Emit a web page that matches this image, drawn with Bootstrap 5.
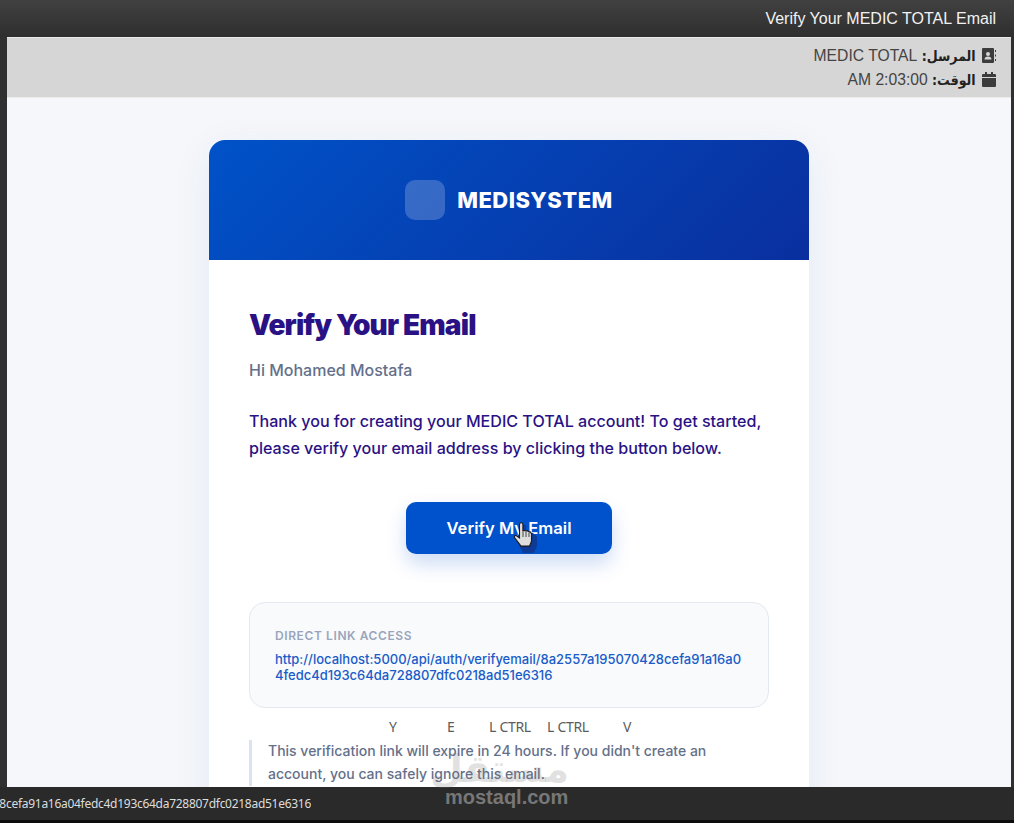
<!DOCTYPE html>
<html lang="en">
  <head>
    <meta charset="UTF-8" />
    <meta name="viewport" content="width=device-width, initial-scale=1.0" />
    <title>Verify Your MEDIC TOTAL Email</title>
    <link
      href="https://cdn.jsdelivr.net/npm/bootstrap@5.3.3/dist/css/bootstrap.min.css"
      rel="stylesheet"
    />
    <style>
      html, body { height: 100%; }
      body { background: #303030; overflow: hidden; font-family: "Inter", sans-serif; }
      .shell { height: 100vh; }
      .title-bar {
        height: 37px; padding-right: 18px; color: #f2f2f2;
        background: linear-gradient(#414141, #2e2e2e);
        font: 16px/37px "Liberation Sans", sans-serif;
      }
      .mail-win { margin: 0 3px 0 7px; min-height: 0; background: #f5f7fa; overflow: hidden; }
      .meta-bar {
        height: 61px; padding: 6px 15px 0 0; background: #d6d6d6; color: #444;
        border-top: 1px solid #e8e8e8; border-bottom: 1px solid #ececec;
        font: 15.7px/24px "Liberation Sans", "DejaVu Sans", sans-serif;
      }
      .meta-row { height: 24px; }
      .meta-bar b { color: #222; font-family: "DejaVu Sans Condensed", "DejaVu Sans", sans-serif; font-size: 14px; }
      .meta-ico { width: 14px; height: 15px; fill: #3c3c3c; vertical-align: -2px; margin-left: 2px; }
      .mail-card {
        width: 600px; margin: 42px auto 0; background: #fff;
        border-radius: 16px 16px 0 0; box-shadow: 0 10px 40px rgba(0, 64, 190, .07);
      }
      .mail-head {
        height: 120px; gap: 12px; color: #fff; border-radius: 16px 16px 0 0;
        background: linear-gradient(135deg, #0052c8, #0a2f9e);
      }
      .logo-box { width: 40px; height: 40px; border-radius: 10px; background: rgba(255, 255, 255, .2); }
      .logo-name { font-size: 22px; font-weight: 800; letter-spacing: .45px; }
      .mail-body { padding: 40px; }
      .mail-title { font-size: 28px; font-weight: 900; line-height: 50px; letter-spacing: -.85px; color: #2a1285; margin: 0 0 7px; }
      .hi-line { font-size: 16px; font-weight: 500; line-height: 26px; color: #64708a; margin: 0 0 25px; }
      .lead-line { font-size: 16.08px; font-weight: 500; line-height: 27px; color: #2a1285; margin: 0 0 40px; }
      .verify-btn {
        width: 206px; height: 52px; border: 0; border-radius: 10px; color: #fff;
        background: #0052cc; font-size: 16.6px; font-weight: 600;
        box-shadow: 0 10px 20px rgba(0, 82, 204, .2);
      }
      .link-box { margin-top: 48px; height: 106px; padding: 25px 20px 25px 25px; background: #f8fafc; border: 1px solid #e4e8f0; border-radius: 16px; }
      .link-cap { font-size: 12px; font-weight: 600; letter-spacing: .6px; line-height: 16px; color: #9aa5bd; margin-bottom: 7px; }
      .link-url { font-size: 13px; font-weight: 500; line-height: 16px; color: #1a5cc8; word-break: break-all; text-decoration: none; display: block; }
      .note-line { margin-top: 32px; padding: 0 20px 1px 16px; border-left: 3px solid #dbe3f0; font-size: 14px; font-weight: 500; line-height: 22.5px; color: #64708a; }
      .status-bar { height: 36px; background: #2a2a2a; border-bottom: 3px solid #0c0c0c; color: #ddd; }
      .status-clip { width: 311px; overflow: hidden; font: 12px/33px "Noto Sans", sans-serif; letter-spacing: -.28px; }
      .key-tag { position: absolute; top: 718px; font: 14px/18px "Noto Sans", sans-serif; letter-spacing: -.3px; color: #5c5c5c; }
      .wm-site { position: absolute; left: 445px; top: 785px; font: 700 20px/24px "Liberation Sans", sans-serif; color: #777; }
      .wm-ar { position: absolute; left: 445px; top: 748px; width: 124px; font: 700 38px/42px "DejaVu Sans", sans-serif; color: rgba(120, 120, 120, .22); text-align: center; }
      .hand-cur { position: absolute; left: 513px; top: 522px; width: 26px; height: 32px; }
    </style>
  </head>

  <body>
    <div class="shell d-flex flex-column">
      <div class="title-bar text-end flex-shrink-0">Verify Your MEDIC TOTAL Email</div>
      <div class="mail-win flex-grow-1">
        <div class="meta-bar text-end">
          <div class="meta-row" dir="rtl">
            <svg class="meta-ico" viewBox="0 0 14 15"><path d="M1 0h10a1 1 0 0 1 1 1v13a1 1 0 0 1-1 1H1a1 1 0 0 1-1-1V1a1 1 0 0 1 1-1zM6 4a2 2 0 1 0 0 4 2 2 0 0 0 0-4zM2.500 11.500h7c0-1.800-1.500-3-3.500-3s-3.500 1.200-3.500 3z" fill-rule="evenodd"/><path d="M13 2h1v2h-1zM13 6.500h1v2h-1zM13 11h1v2h-1z"/></svg>
            <b>المرسل:</b> MEDIC TOTAL
          </div>
          <div class="meta-row" dir="rtl">
            <svg class="meta-ico" viewBox="0 0 14 15"><path d="M3 0h2v2h4V0h2v2h2a1 1 0 0 1 1 1v2H0V3a1 1 0 0 1 1-1h2zM0 6h14v8a1 1 0 0 1-1 1H1a1 1 0 0 1-1-1z"/></svg>
            <b>الوقت:</b> 2:03:00 AM
          </div>
        </div>
        <div class="mail-card">
          <div class="mail-head d-flex align-items-center justify-content-center">
            <div class="logo-box"></div>
            <div class="logo-name">MEDISYSTEM</div>
          </div>
          <div class="mail-body">
            <h1 class="mail-title">Verify Your Email</h1>
            <p class="hi-line">Hi Mohamed Mostafa</p>
            <p class="lead-line">Thank you for creating your MEDIC TOTAL account! To get started, please verify your email address by clicking the button below.</p>
            <div class="text-center"><button class="btn verify-btn">Verify My Email</button></div>
            <div class="link-box">
              <div class="link-cap">DIRECT LINK ACCESS</div>
              <a class="link-url" href="#">http://localhost:5000/api/auth/verifyemail/8a2557a195070428cefa91a16a04fedc4d193c64da728807dfc0218ad51e6316</a>
            </div>
            <div class="note-line">This verification link will expire in 24 hours. If you didn't create an account, you can safely ignore this email.</div>
          </div>
        </div>
      </div>
      <div class="status-bar flex-shrink-0">
        <div class="status-clip d-flex justify-content-end text-nowrap">
          <span class="flex-shrink-0">http://localhost:5000/api/auth/verifyemail/8a2557a195070428cefa91a16a04fedc4d193c64da728807dfc0218ad51e6316</span>
        </div>
      </div>
    </div>

    <span class="key-tag" style="left: 389px">Y</span>
    <span class="key-tag" style="left: 447px">E</span>
    <span class="key-tag" style="left: 489px">L CTRL</span>
    <span class="key-tag" style="left: 547px">L CTRL</span>
    <span class="key-tag" style="left: 623px">V</span>
    <div class="wm-ar" dir="rtl">مستقل</div>
    <div class="wm-site">mostaql.com</div>

    <svg class="hand-cur" viewBox="0 0 26 32">
      <path d="M9 10V3h4v7l7 1 4 4v9l-3 7H10L3 17l2-4z" fill="#0d3a96"/>
      <path d="M6.500 10V2.500a1.700 1.700 0 0 1 3.400 0V9l1.500-.5 1.500.5 1.500-.3 1.700 1.200 1.400.2 1 2v7l-2 5H8L1.500 15.500c-.6-1.500.8-2.600 2-1.700l3 2.200z" fill="#dedede" stroke="#1a1a1a" stroke-width="1.100"/>
      <path d="M10 10v5M13 10v5M16 11v4" stroke="#333" stroke-width=".9" fill="none"/>
    </svg>
  </body>
</html>
